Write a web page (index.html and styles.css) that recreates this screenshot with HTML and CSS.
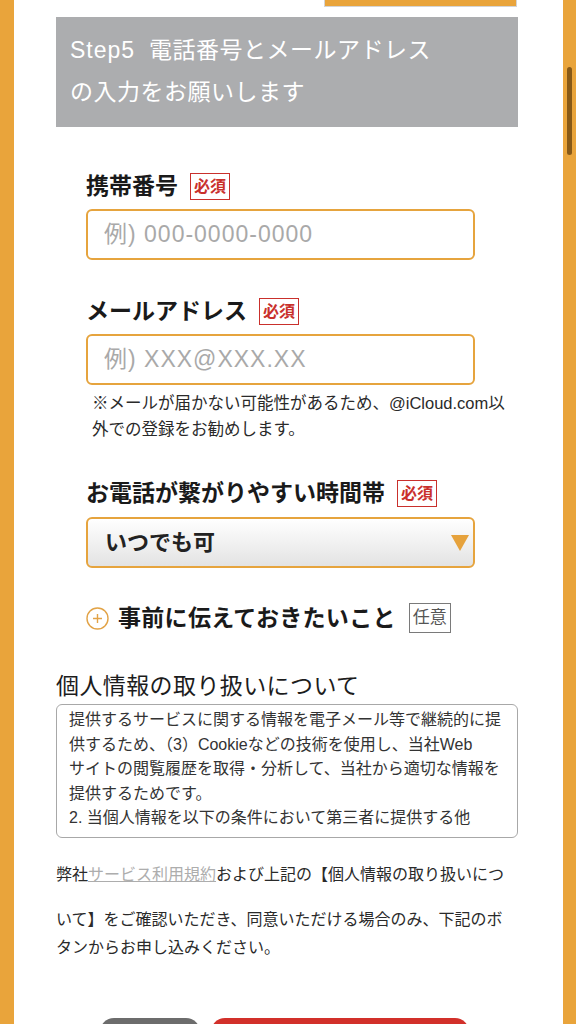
FILE: index.html
```html
<!DOCTYPE html>
<html lang="ja">
<head>
<meta charset="utf-8">
<meta name="viewport" content="width=576">
<title>Step5</title>
<link rel="stylesheet" href="styles.css">
</head>
<body>
<main class="sheet">
  <div class="prev-row"><div class="prev-btn"></div></div>
  <h2 class="step"><span class="step-no">Step5</span>電話番号とメールアドレス<br>の入力をお願いします</h2>

  <div class="form">
    <div class="field">
      <div class="label">携帯番号<span class="badge req">必須</span></div>
      <input class="control" type="tel" placeholder="例) 000-0000-0000">
    </div>

    <div class="field">
      <div class="label">メールアドレス<span class="badge req">必須</span></div>
      <input class="control" type="email" placeholder="例) XXX@XXX.XX">
      <p class="note">※メールが届かない可能性があるため、@iCloud.com以<br>外での登録をお勧めします。</p>
    </div>

    <div class="field">
      <div class="label">お電話が繋がりやすい時間帯<span class="badge req">必須</span></div>
      <div class="select-wrap">
        <select class="control select">
          <option>いつでも可</option>
        </select>
        <svg class="caret" width="18" height="16" viewBox="0 0 18 16"><polygon points="0,0 18,0 9,16" fill="#e6a23c"/></svg>
      </div>
    </div>

    <div class="field extra">
      <div class="label">
        <svg class="plus" width="23" height="23" viewBox="0 0 23 23"><circle cx="11.5" cy="11.5" r="10.5" fill="none" stroke="#e2a347" stroke-width="1.4"/><path d="M11.5 7v9M7 11.5h9" stroke="#e2a347" stroke-width="1.4" fill="none"/></svg>
        <span class="extra-text">事前に伝えておきたいこと</span><span class="badge opt">任意</span>
      </div>
    </div>
  </div>

  <h3 class="policy-title">個人情報の取り扱いについて</h3>
  <div class="policy">提供するサービスに関する情報を電子メール等で継続的に提<br>供するため、（3）Cookieなどの技術を使用し、当社Web<br>サイトの閲覧履歴を取得・分析して、当社から適切な情報を<br>提供するためです。<br>2. 当個人情報を以下の条件において第三者に提供する他</div>

  <p class="consent">弊社<a href="#">サービス利用規約</a>および上記の【個人情報の取り扱いについて】をご確認いただき、同意いただける場合のみ、下記のボタンからお申し込みください。</p>

  <div class="buttons">
    <button class="btn back" type="button">戻る</button>
    <button class="btn submit" type="button">確認画面へ</button>
  </div>
</main>
<div class="scrollbar"></div>
</body>
</html>
```
FILE: styles.css
```css
* { box-sizing: border-box; }
html, body { margin: 0; padding: 0; }
body {
  background: #e9a43b;
  font-family: "Liberation Sans", "Noto Sans CJK JP", sans-serif;
  color: #1c1c1c;
}
.sheet {
  background: #fff;
  margin: 0 13px 0 14px;
  padding: 0 45px 40px 42px;
}
.prev-row { display: flex; justify-content: flex-end; margin-bottom: 10px; padding-right: 1px; }
.prev-btn {
  width: 193px; height: 7px;
  background: #e9a43b;
  border: 1px solid #d4d4d4; border-top: none;
}
.step {
  margin: 0;
  background: #acadaf;
  color: #fff;
  font-weight: 400;
  font-size: 23px;
  letter-spacing: 0.5px;
  line-height: 42px;
  padding: 12px 14px 14px;
}
.step-no { margin-right: 14px; letter-spacing: 1px; }

.form { padding: 44px 0 0 30px; }
.field + .field { margin-top: 36px; }
.field.extra { margin-top: 35px; }
.label {
  display: flex; align-items: center;
  font-size: 23px; font-weight: 700;
  line-height: 30px; height: 30px;
  color: #1a1a1a;
}
.badge {
  margin-left: 12px;
  font-size: 16px; line-height: 25px;
  padding: 0 3px;
  border: 1.5px solid #c9302c;
  color: #c9302c;
  font-weight: 700;
}
.badge.opt {
  margin-left: 13px;
  border-color: #7a7a7a; color: #555;
  font-weight: 400; font-size: 17px; line-height: 28px;
  padding: 0 3px;
}
.control {
  display: block;
  width: 389px; height: 51px;
  margin: 8px 0 0;
  border: 2.5px solid #e6a43e;
  border-radius: 6px;
  background: #fff;
  padding: 0 0 0 16px;
  font-family: "Liberation Sans", "Noto Sans CJK JP", sans-serif;
  font-size: 23px;
  color: #222;
  outline: none;
}
.control::placeholder { color: #a9a9a9; letter-spacing: 1px; }
.note {
  margin: 5px 0 0 6px;
  font-size: 16.5px; line-height: 26px;
  color: #2a2a2a;
  white-space: nowrap;
}
.select-wrap { position: relative; width: 389px; margin-top: 9px; }
.select {
  -webkit-appearance: none; appearance: none;
  margin: 0;
  background: linear-gradient(#ffffff, #e3e3e3);
  font-size: 22px;
  font-weight: 700;
  padding-left: 17px;
}
.caret { position: absolute; right: 6px; top: 18px; }
.plus { margin-right: 9px; flex: none; }
.extra-text { letter-spacing: 0.3px; }

.policy-title {
  margin: 37px 0 0;
  font-size: 23px; font-weight: 400;
  letter-spacing: 0.4px;
  line-height: 32px;
  color: #1c1c1c;
}
.policy {
  height: 134px;
  margin-top: 2px;
  border: 1px solid #a8a8a8;
  border-radius: 6px;
  padding: 3px 12px 0;
  font-size: 16px; line-height: 24.6px;
  color: #333;
  overflow: hidden;
  white-space: nowrap;
}
.consent {
  margin: 23px 0 0;
  font-size: 16px; line-height: 28px;
  color: #2a2a2a;
}
.consent a {
  display: inline-block;
  padding-bottom: 17px;
  color: #adadad;
  text-decoration: underline;
}
.buttons {
  display: flex; justify-content: center; gap: 11px;
  margin-top: 56px;
  padding-right: 5px;
}
.btn {
  height: 56px; border: none; border-radius: 14px;
  color: #fff; font-size: 18px; font-weight: 700;
  font-family: "Liberation Sans", "Noto Sans CJK JP", sans-serif;
}
.btn.back { width: 100px; background: #6c6c6c; }
.btn.submit { width: 258px; background: #d2302a; }

.scrollbar {
  position: fixed;
  right: 4px; top: 67px;
  width: 5px; height: 88px;
  border-radius: 3px;
  background: rgba(70, 40, 0, 0.6);
}
```
